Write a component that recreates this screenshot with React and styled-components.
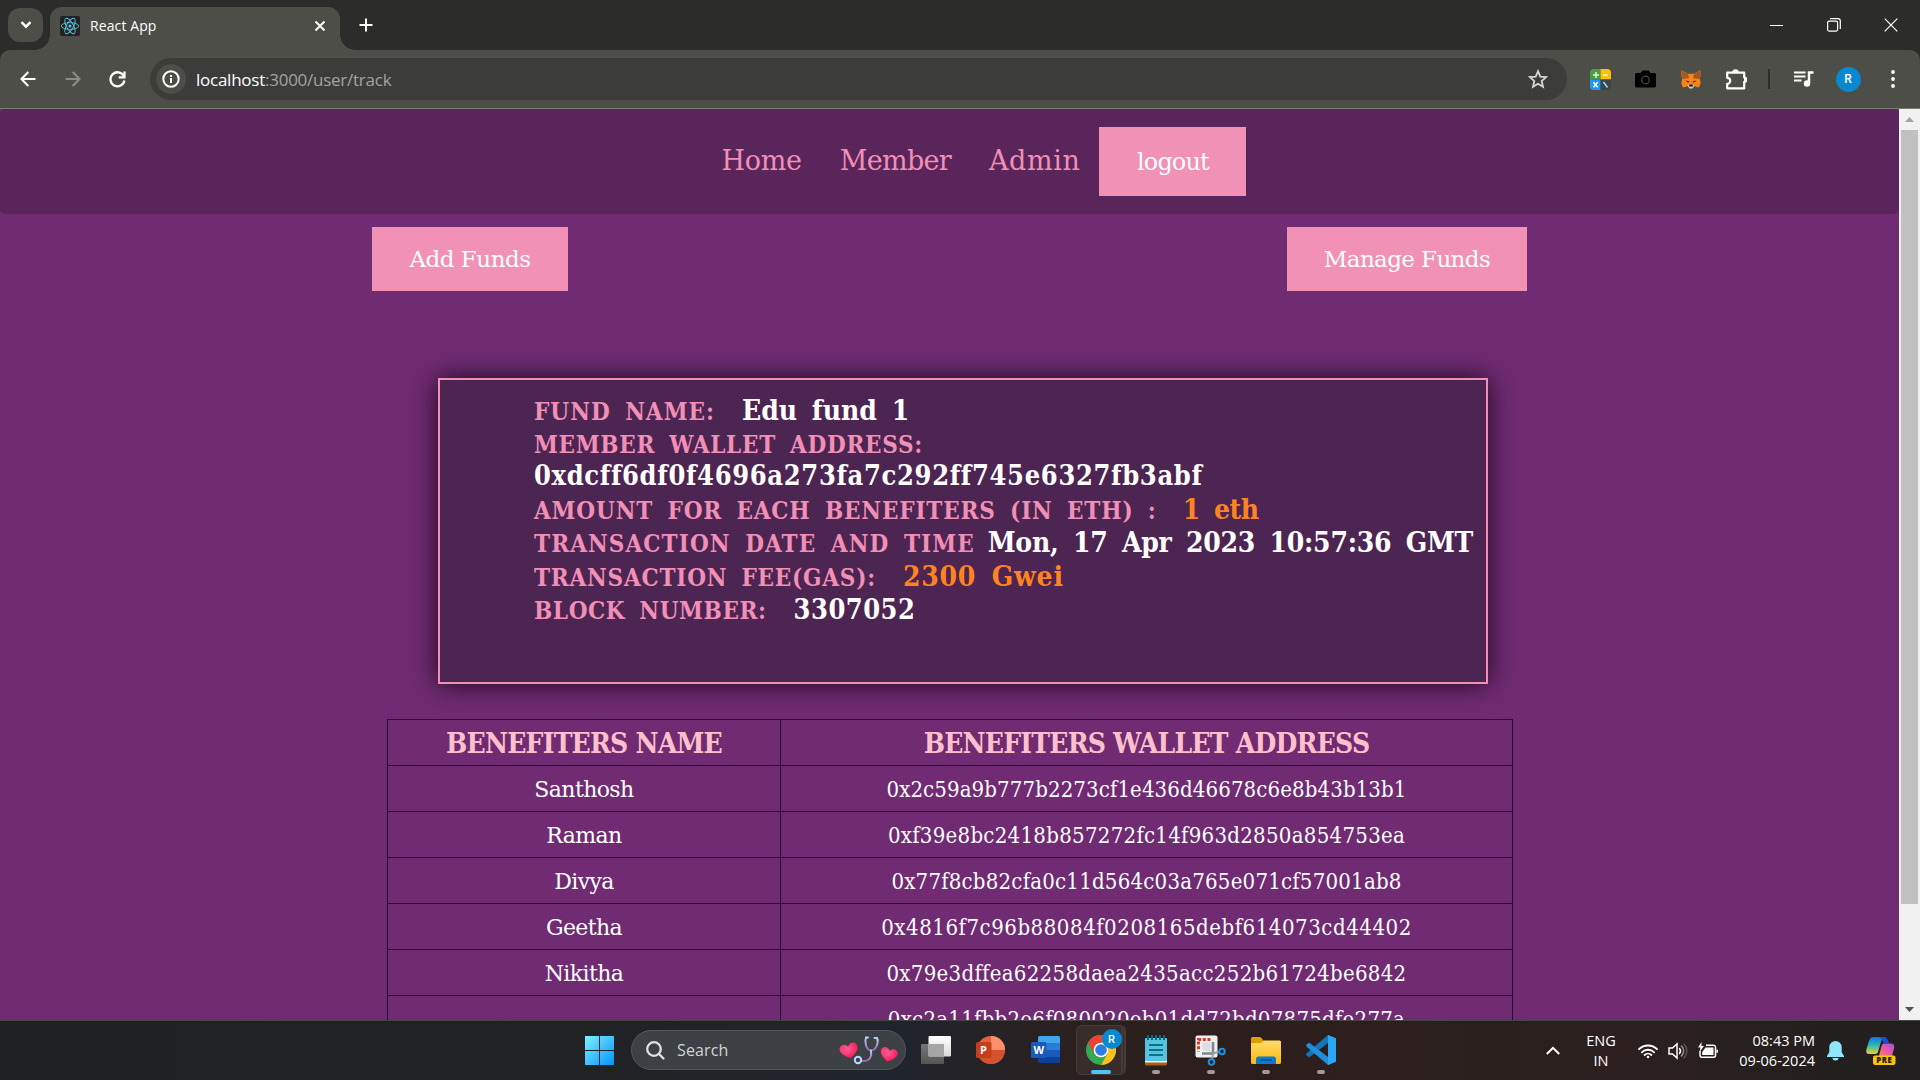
import React from "react";
import styled, { createGlobalStyle } from "styled-components";

const GlobalStyle = createGlobalStyle`
  *, *::before, *::after { box-sizing: border-box; }
  html, body { margin: 0; padding: 0; background: #702b73; overflow: hidden; }
`;

const UI = `"Open Sans", "Noto Sans", sans-serif`;
const SERIF = `"DejaVu Serif", "Liberation Serif", serif`;
const SERIF_NARROW = `"DejaVu Serif Condensed", "DejaVu Serif", serif`;

const Screen = styled.div`
  width: 1920px;
  height: 1080px;
  display: flex;
  flex-direction: column;
  overflow: hidden;
  font-family: ${UI};
`;

/* ---------- browser chrome ---------- */

const TabStrip = styled.div`
  height: 50px;
  flex: none;
  background: #2c2c2a;
  display: flex;
  align-items: flex-end;
  padding-left: 8px;
`;

const TabSearch = styled.div`
  width: 35px;
  height: 34px;
  margin-bottom: 8px;
  border-radius: 12px;
  background: #4d4e48;
  display: grid;
  place-items: center;
`;

const Tab = styled.div`
  position: relative;
  width: 290px;
  height: 43px;
  margin-left: 7px;
  border-radius: 12px 12px 0 0;
  background: #4d4e48;
  display: flex;
  align-items: center;
  padding: 0 14px 6px 10px;
  color: #fff;
  font-size: 14px;

  &::before,
  &::after {
    content: "";
    position: absolute;
    bottom: 0;
    width: 15px;
    height: 15px;
  }
  &::before {
    left: -15px;
    background: radial-gradient(circle at 0 0, transparent 14.5px, #4d4e48 15px);
  }
  &::after {
    right: -15px;
    background: radial-gradient(circle at 100% 0, transparent 14.5px, #4d4e48 15px);
  }
`;

const Favicon = styled.div`
  width: 20px;
  height: 20px;
  border-radius: 2px;
  background: #222;
  display: grid;
  place-items: center;
`;

const TabTitle = styled.span`
  flex: 1;
  margin-left: 10px;
  letter-spacing: 0.1px;
`;

const NewTab = styled.div`
  width: 20px;
  height: 50px;
  margin-left: 16px;
  display: grid;
  place-items: center;
`;

const WindowButtons = styled.div`
  margin-left: auto;
  height: 50px;
  display: flex;
  align-items: center;
  padding-right: 1px;
`;

const WindowButton = styled.div`
  width: 57px;
  display: flex;
  justify-content: center;
`;

const ToolbarBack = styled.div`
  flex: none;
  height: 59px;
  background: #2c2c2a;
`;

const Toolbar = styled.div`
  height: 59px;
  background: #4d4e48;
  border-bottom: 1px solid #787973;
  border-radius: 10px 10px 0 0;
  display: flex;
  align-items: center;
`;

const Slot = styled.div`
  flex: none;
  width: ${(p) => p.$w}px;
  display: flex;
  justify-content: center;
  align-items: center;
`;

const Omnibox = styled.div`
  width: 1417px;
  height: 42px;
  margin-left: 5px;
  padding: 0 19px 0 6px;
  border-radius: 21px;
  background: #3c3c3a;
  display: flex;
  align-items: center;
`;

const SiteInfo = styled.div`
  width: 30px;
  height: 30px;
  border-radius: 50%;
  background: #4d4e48;
  display: grid;
  place-items: center;
`;

const Url = styled.div`
  flex: 1;
  margin-left: 10px;
  font-size: 17px;
  letter-spacing: -0.25px;
  color: #a3a4a0;
  b {
    font-weight: 400;
    color: #fff;
  }
`;

const Extensions = styled.div`
  display: flex;
  align-items: center;
  margin-left: 11px;
`;

const Divider = styled.div`
  width: 2px;
  height: 20px;
  background: #2d2d2a;
`;

const Avatar = styled.div`
  width: ${(p) => p.$size}px;
  height: ${(p) => p.$size}px;
  border-radius: 50%;
  background: #0788d1;
  color: #fff;
  font: 500 ${(p) => p.$font}px/1 Roboto, sans-serif;
  display: grid;
  place-items: center;
`;

/* ---------- page ---------- */

const Viewport = styled.div`
  height: 911px;
  flex: none;
  display: flex;
  overflow: hidden;
`;

const Page = styled.main`
  flex: 1;
  height: 911px;
  overflow: hidden;
  background: #702b73;
  font-family: ${SERIF};
`;

const Nav = styled.nav`
  height: 105px;
  padding-left: 50px;
  border-radius: 5px;
  background: #59255b;
  display: flex;
  align-items: center;
  justify-content: center;
`;

const NavLink = styled.a`
  padding: 0 19px 2px;
  font-size: 27px;
  letter-spacing: ${(p) => p.$ls}px;
  color: #f18fb6;
`;

const PinkButton = styled.button`
  width: ${(p) => p.$w}px;
  height: ${(p) => p.$h}px;
  padding: 0;
  border: 0;
  background: #f191b5;
  color: #fff;
  font-family: ${SERIF};
  font-size: ${(p) => p.$size}px;
  letter-spacing: ${(p) => p.$ls}px;
`;

const FundActions = styled.div`
  width: 1155px;
  margin: 13px 0 0 372px;
  display: flex;
  justify-content: space-between;
`;

const Card = styled.section`
  width: 1050px;
  height: 306px;
  margin: 87px 0 0 438px;
  padding: 14px 0 0 94px;
  border: 2px solid #f18fb6;
  background: #4d2552;
  box-shadow: 0 0 25px rgba(10, 0, 10, 0.85);
`;

const Line = styled.div`
  height: ${(p) => p.$h || 33}px;
  font: 700 28px/33px ${SERIF_NARROW};
  white-space: nowrap;
`;

const Label = styled.span`
  font-size: 24px;
  line-height: 1;
  word-spacing: 6px;
  letter-spacing: ${(p) => p.$ls}px;
  color: #f18fb6;
`;

const Value = styled.span`
  font-size: ${(p) => p.$size || 28}px;
  line-height: 1;
  margin-left: ${(p) => p.$gap || 0}px;
  word-spacing: 6px;
  letter-spacing: ${(p) => p.$ls}px;
  color: ${(p) => (p.$accent ? "#ff8421" : "#fff")};
`;

const Table = styled.table`
  width: 1125px;
  margin: 35px 0 0 387px;
  table-layout: fixed;
  border-collapse: collapse;
  font-family: ${SERIF_NARROW};
  text-align: center;
`;

const Th = styled.th`
  width: ${(p) => p.$w}px;
  height: 46px;
  padding: 2px 0 0;
  border: 1px solid #270b2a;
  font-size: 28px;
  line-height: 32px;
  letter-spacing: -0.8px;
  color: #ffc0cb;
  white-space: nowrap;
`;

const Td = styled.td`
  height: 46px;
  padding: 3px 0 0;
  border: 1px solid #270b2a;
  font-family: ${(p) => (p.$wide ? SERIF : SERIF_NARROW)};
  font-size: 22px;
  line-height: 26px;
  letter-spacing: ${(p) => p.$ls}px;
  color: #fff;
  white-space: nowrap;
`;

const Scrollbar = styled.div`
  width: 21px;
  height: 911px;
  background: #f1f1f1;
  display: flex;
  flex-direction: column;
  align-items: center;
`;

const ScrollArrow = styled.div`
  height: 21px;
  width: 21px;
  display: grid;
  place-items: center;
`;

const Thumb = styled.div`
  width: 17px;
  height: 774px;
  margin-bottom: auto;
  background: #c1c1c1;
`;

/* ---------- taskbar ---------- */

const Taskbar = styled.footer`
  height: 60px;
  flex: none;
  display: flex;
  align-items: flex-start;
  border-top: 1px solid #424441;
  background: linear-gradient(90deg, #202122 0, #202224 580px, #20242c 900px, #2b201f 1080px, #2c1e1c 1250px, #2b201f 1620px, #211f1f 1920px);
  color: #fff;
`;

const StartArea = styled.div`
  margin-left: 585px;
  display: flex;
  align-items: center;
  height: 58px;
`;

const SearchBox = styled.div`
  width: 275px;
  height: 40px;
  margin-left: 17px;
  padding: 0 7px 0 14px;
  border-radius: 20px;
  border: 1px solid #54575a;
  background: #3d4044;
  display: flex;
  align-items: center;
  color: #d3d4d5;
  font-size: 16px;
`;

const SearchText = styled.span`
  flex: 1;
  margin-left: 12px;
  letter-spacing: 0.15px;
`;

const Apps = styled.div`
  display: flex;
  margin-left: 2px;
`;

const AppSlot = styled.div`
  position: relative;
  width: 55px;
  height: 58px;
  display: flex;
  align-items: center;
  justify-content: center;

  &::after {
    content: "";
    display: ${(p) => (p.$state ? "block" : "none")};
    position: absolute;
    bottom: 5px;
    width: ${(p) => (p.$state === "active" ? 20 : 8)}px;
    height: 4px;
    border-radius: 2px;
    background: ${(p) => (p.$state === "active" ? "#4cc2ff" : "#a19a99")};
  }
`;

const ActiveTile = styled.div`
  position: relative;
  width: 50px;
  height: 50px;
  border-radius: 6px;
  border: 1px solid #463b3a;
  border-right: 5px double #463b3a;
  background: #392d2c;
  display: grid;
  place-items: center;
  padding-left: 4px;
`;

const Badge = styled.div`
  position: absolute;
  right: -1px;
  top: 3px;
`;

const Tray = styled.div`
  margin-left: auto;
  display: flex;
  align-items: center;
  height: 59px;
`;

const TrayText = styled.div`
  width: ${(p) => p.$w}px;
  margin: 0 ${(p) => p.$mr}px 0 ${(p) => p.$ml}px;
  text-align: ${(p) => p.$align};
  font-size: 14.5px;
  line-height: 20px;
  white-space: nowrap;
`;

const TrayIcon = styled.div`
  display: flex;
  margin-left: ${(p) => p.$ml || 0}px;
`;

/* ---------- icons ---------- */

const Stroke = ({ w, h = w, vb, sw = 2, color = "#fff", children, cap = "butt" }) => (
  <svg width={w} height={h} viewBox={vb || `0 0 ${w} ${h}`} fill="none" stroke={color} strokeWidth={sw} strokeLinecap={cap} strokeLinejoin="miter">
    {children}
  </svg>
);

const ReactLogo = () => (
  <svg width="20" height="20" viewBox="-10 -10 20 20" fill="none" stroke="#58c4dc" strokeWidth="0.9">
    <ellipse rx="8.7" ry="3.4" />
    <ellipse rx="8.7" ry="3.4" transform="rotate(60)" />
    <ellipse rx="8.7" ry="3.4" transform="rotate(120)" />
    <circle r="1.6" fill="#58c4dc" stroke="none" />
  </svg>
);

const CalcIcon = () => (
  <svg width="21" height="21" viewBox="0 0 21 21">
    <path d="M4 0h6.5v10.5H0V4a4 4 0 0 1 4-4z" fill="#43a047" />
    <path d="M10.5 0H17a4 4 0 0 1 4 4v6.5H10.5z" fill="#ffc107" />
    <path d="M0 10.5h10.5V21H4a4 4 0 0 1-4-4z" fill="#2196f3" />
    <path d="M10.5 10.5H21V17a4 4 0 0 1-4 4h-6.5z" fill="#37474f" />
    <path d="M3 6h6M6 3v6M13 6h5" stroke="#e8f5e9" strokeWidth="1.5" />
    <path d="M3.5 13.2l4.200 5M7.700 13.200l-4.200 5" stroke="#fff" strokeWidth="1.5" />
    <path d="M13.5 13l4 5.5" stroke="#cfd8dc" strokeWidth="1.3" />
  </svg>
);

const CameraIcon = () => (
  <svg width="21" height="18" viewBox="0 0 21 18">
    <path d="M1.5 3H5.5L7.5.5h6L15.5 3h4A1.5 1.5 0 0 1 21 4.5v11.500A1.5 1.5 0 0 1 19.5 17.500h-18A1.5 1.5 0 0 1 0 16V4.500A1.5 1.5 0 0 1 1.5 3z" fill="#000" />
    <circle cx="10.5" cy="10" r="3.8" fill="none" stroke="#4d4e48" strokeWidth="1.2" />
  </svg>
);

const FoxIcon = () => (
  <svg width="20" height="19" viewBox="0 0 20 19">
    <path d="M.6.3 7 3.800h6L19.400.3l.3 5-1 3.700 1 4-1.700 4.500-4.500-1.200L11.500 18h-3l-2-1.700L2 17.500.3 13l1-4L.3 5.300z" fill="#f6851b" />
    <path d="M.6.3 7 3.800 8 8.200 1.500 9 .3 5.300zM19.400.3 13 3.800l-1 4.400 6.500.8 1.200-3.700z" fill="#a8571f" />
    <path d="M4.500 10.500l4 .8-1.300 1.500zM15.500 10.500l-4 .8 1.300 1.500z" fill="#33302c" />
    <path d="M6.500 15.500l2-1h3l2 1-2 3h-3z" fill="#d9c8ba" />
    <path d="M8.300 14.600h3.400l.3 1.900H8z" fill="#161616" />
  </svg>
);

const WindowsIcon = () => (
  <svg width="29" height="29" viewBox="0 0 29 29">
    <defs>
      <linearGradient id="win" x1="0" y1="0" x2="1" y2="1">
        <stop offset="0" stopColor="#7df0ff" />
        <stop offset="1" stopColor="#0594fb" />
      </linearGradient>
    </defs>
    <path d="M0 0h14v14H0zM15 0h14v14H15zM0 15h14v14H0zM15 15h14v14H15z" fill="url(#win)" />
  </svg>
);

const HeartsScope = () => (
  <svg width="60" height="30" viewBox="0 0 60 30">
    <defs>
      <radialGradient id="heart" cx=".4" cy=".35" r=".7">
        <stop offset="0" stopColor="#ff5f9b" />
        <stop offset="1" stopColor="#f3154f" />
      </radialGradient>
      <linearGradient id="tube" x1="0" y1="0" x2="0" y2="1">
        <stop offset="0" stopColor="#b9d3f2" />
        <stop offset="1" stopColor="#9068a6" />
      </linearGradient>
    </defs>
    <g fill="url(#heart)">
      <path d="M0 0C-6-3.500-10-7-9-11.500-8-15.500-2-16 0-11.500 2-16 8-15.500 9-11.500 10-7 6-3.500 0 0z" transform="translate(13 23) rotate(-14)" />
      <path d="M0 0C-6-3.500-10-7-9-11.500-8-15.500-2-16 0-11.500 2-16 8-15.500 9-11.500 10-7 6-3.500 0 0z" transform="translate(49 26.5) rotate(14) scale(.93)" />
    </g>
    <g fill="none" stroke="url(#tube)" strokeWidth="2" strokeLinecap="round">
      <path d="M30 2.500h-2c-1.500 4 0 13 5 13s8-8 6-12.500h-2.500" />
      <path d="M33 15.500c1 6-1 10.500-7 10.500h-3" />
    </g>
    <circle cx="20" cy="25" r="3.2" fill="none" stroke="#b5dcff" strokeWidth="2" />
  </svg>
);

const TaskViewIcon = () => (
  <svg width="30" height="28" viewBox="0 0 30 28">
    <defs>
      <linearGradient id="tvb" x1="0" y1="0" x2="0" y2="1">
        <stop offset="0" stopColor="#777" />
        <stop offset="1" stopColor="#555" />
      </linearGradient>
      <linearGradient id="tvf" x1="0" y1="0" x2="0" y2="1">
        <stop offset="0" stopColor="#fff" />
        <stop offset="1" stopColor="#d9d9d9" />
      </linearGradient>
    </defs>
    <rect y="8" width="23" height="20" rx="1" fill="url(#tvb)" />
    <rect x="7.5" width="22.5" height="20.5" rx="1" fill="url(#tvf)" />
    <path d="M7.5 8H23v12.500H7.500z" fill="#a5a5a5" />
  </svg>
);

const OfficeText = ({ x, y, children, size = 11 }) => (
  <text x={x} y={y} fill="#fff" fontFamily="Open Sans, sans-serif" fontWeight="700" fontSize={size} textAnchor="middle">
    {children}
  </text>
);

const PowerPointIcon = () => (
  <svg width="29" height="28" viewBox="0 0 29 28">
    <circle cx="15" cy="14" r="14" fill="#e0603f" />
    <path d="M15 0a14 14 0 0 1 14 14H15z" fill="#ff8f6b" />
    <path d="M1 14a14 14 0 0 0 28 0z" fill="#d35230" />
    <rect y="6" width="15.5" height="16" rx="1.5" fill="#c43e1c" />
    <OfficeText x="7.5" y="18">P</OfficeText>
  </svg>
);

const WordIcon = () => (
  <svg width="29" height="28" viewBox="0 0 29 28">
    <path d="M7 1.500A1.5 1.5 0 0 1 8.500 0h19A1.5 1.5 0 0 1 29 1.500V7H7z" fill="#41a5ee" />
    <path d="M7 7h22v7H7z" fill="#2b7cd3" />
    <path d="M7 14h22v7H7z" fill="#185abd" />
    <path d="M7 21h22v4.500a1.5 1.5 0 0 1-1.500 1.500h-19A1.5 1.5 0 0 1 7 25.500z" fill="#103f91" />
    <rect y="6" width="15.5" height="16" rx="1.5" fill="#185abd" />
    <OfficeText x="7.7" y="18">W</OfficeText>
  </svg>
);

const ChromeIcon = () => (
  <svg width="30" height="30" viewBox="-15 -15 30 30">
    <circle r="15" fill="#34a853" />
    <path d="M-13-7.500A15 15 0 0 1 13-7.500H0L-6.500 3.700z" fill="#ea4335" />
    <path d="M13-7.500A15 15 0 0 1 0 15L6.500 3.700 0-7.500z" fill="#fbc116" />
    <circle r="7.3" fill="#fff" />
    <circle r="5.8" fill="#2a7de9" />
  </svg>
);

const NotepadIcon = () => (
  <svg width="22" height="31" viewBox="0 0 22 31">
    <rect y="25" width="22" height="5.5" rx="1" fill="#a85e1b" />
    <rect y="25" width="22" height="2.5" fill="#f5efe6" />
    <rect y="3" width="22" height="23" rx="1" fill="#54c4e0" />
    <path d="M3 0v5M7 0v5M11 0v5M15 0v5M19 0v5" stroke="#0c6880" strokeWidth="2" />
    <path d="M4 10h14M4 15h14M4 20h14" stroke="#0e6f8c" strokeWidth="1.8" />
  </svg>
);

const SnipIcon = () => (
  <svg width="31" height="31" viewBox="0 0 31 31">
    <rect x="0.5" y="0.5" width="22" height="22" rx="2" fill="#eef0f2" />
    <path d="M15.500 4.500H3.500v12" fill="none" stroke="#d83b1e" strokeWidth="3" strokeDasharray="3 1.7" />
    <path d="M7.500 8h8v8h-8z" fill="#dcdfe2" />
    <path d="M18 7v11.500H7" fill="none" stroke="#7f868c" strokeWidth="2.6" />
    <path d="M18 18.500l7-2M18 18.500l-1 6" stroke="#9aa1a6" strokeWidth="2" />
    <circle cx="27" cy="16.5" r="2.8" fill="none" stroke="#1b8fe0" strokeWidth="2" />
    <circle cx="16.5" cy="27" r="2.8" fill="none" stroke="#1b8fe0" strokeWidth="2" />
  </svg>
);

const FolderIcon = () => (
  <svg width="30" height="27" viewBox="0 0 30 27">
    <defs>
      <linearGradient id="fold" x1="0" y1="0" x2="0" y2="1">
        <stop offset="0" stopColor="#ffdb6b" />
        <stop offset="1" stopColor="#f9b90f" />
      </linearGradient>
    </defs>
    <path d="M0 1.500A1.5 1.5 0 0 1 1.500 0h8l3.500 4H28v6H0z" fill="#e19d00" />
    <path d="M0 6h10l3-2.500h15.500A1.5 1.5 0 0 1 30 5v20.500A1.5 1.5 0 0 1 28.500 27h-27A1.5 1.5 0 0 1 0 25.500z" fill="url(#fold)" />
    <path d="M5 27v-5a2.5 2.5 0 0 1 2.500-2.500h15A2.5 2.5 0 0 1 25 22v5z" fill="#0f78cf" />
    <path d="M9 23h12" stroke="#0a4f92" strokeWidth="1.5" />
  </svg>
);

const VsCodeIcon = () => (
  <svg width="30" height="30" viewBox="0 0 30 30">
    <path d="M22 8L3.300 22.200.3 20.600v-2L22 0h1z" fill="#1276bd" />
    <path d="M22 22L3.300 7.800.3 9.400v2L22 30h1z" fill="#1d8fdc" />
    <path d="M22 0l8 3.200v23.600L22 30z" fill="#2aa8f3" />
  </svg>
);

const WifiIcon = () => (
  <Stroke w={20} h={16} sw={1.8} cap="round">
    <path d="M1 6.200a12.800 12.800 0 0 1 18 0M3.800 9.300a8.800 8.800 0 0 1 12.400 0M6.600 12a4.900 4.900 0 0 1 6.800 0" />
    <circle cx="10" cy="14" r="1.3" fill="#fff" stroke="none" />
  </Stroke>
);

const VolumeIcon = () => (
  <Stroke w={20} h={18} sw={1.5} cap="round">
    <path d="M1 6h3.500L9 2v14l-4.500-4H1z" />
    <path d="M11.500 6.500a4 4 0 0 1 0 5" />
    <path d="M13.500 4a7 7 0 0 1 0 10" stroke="#99908f" />
    <path d="M16 2a10 10 0 0 1 0 14" stroke="#5d5352" />
  </Stroke>
);

const BatteryIcon = () => (
  <svg width="21" height="17" viewBox="0 0 21 17">
    <path d="M8 3.200h7.500a2 2 0 0 1 2 2v8a2 2 0 0 1-2 2H4a2 2 0 0 1-2-2V9" fill="none" stroke="#fff" strokeWidth="1.5" />
    <path d="M7.500 5.500h8v7.500H4.200V10z" fill="#fff" />
    <path d="M18.500 7.500c1.500 0 1.500.5 1.500 1.700s0 1.700-1.500 1.700z" fill="#fff" />
    <path d="M3.500 0L0 5.500h2.500L1.500 10 6 4H3.500z" fill="#fff" />
  </svg>
);

const BellIcon = () => (
  <svg width="17" height="20" viewBox="0 0 17 20">
    <path d="M8.500 0a6.200 6.200 0 0 1 6.200 6.200v5L17 15v1H0v-1l2.300-3.800v-5A6.200 6.200 0 0 1 8.500 0zM5.500 17h6a3 2.500 0 0 1-6 0z" fill="#8fe6fb" />
  </svg>
);

const CopilotIcon = () => (
  <svg width="30" height="30" viewBox="0 0 30 30">
    <defs>
      <linearGradient id="cpa" x1="0" y1="0" x2="0" y2="1">
        <stop offset="0" stopColor="#1573e0" />
        <stop offset=".5" stopColor="#2db9b4" />
        <stop offset="1" stopColor="#f1d320" />
      </linearGradient>
      <linearGradient id="cpb" x1="1" y1="0" x2="0" y2="1">
        <stop offset="0" stopColor="#a84fe0" />
        <stop offset=".6" stopColor="#ef5a9c" />
        <stop offset="1" stopColor="#fb8a54" />
      </linearGradient>
    </defs>
    <path d="M7 1h12c-3 1-4 4-5 8l-2 7c-1 2-2 2-4 2H3c-3 0-3-3-2.500-5L3 5c.7-2 2-4 4-4z" fill="url(#cpa)" />
    <path d="M12 1h6c3 0 3.500 2.500 5 6h-4c-2.500 0-3-5-7-6z" fill="#1c50cf" />
    <path d="M18 7.500h7c3.500 0 3.500 3 3 5l-2 7.500H13l2-8c.7-3 1.500-4.500 3-4.500z" fill="url(#cpb)" />
    <rect x="7" y="19.5" width="22.5" height="9.5" rx="2" fill="#fcc30b" />
    <text x="18.3" y="27.3" fill="#201a10" fontFamily="Open Sans, sans-serif" fontWeight="800" fontSize="7.8" letterSpacing=".6" textAnchor="middle">
      PRE
    </text>
  </svg>
);

/* ---------- data ---------- */

const benefiters = [
  { name: "Santhosh", address: "0x2c59a9b777b2273cf1e436d46678c6e8b43b13b1", ls: 0.11 },
  { name: "Raman", address: "0xf39e8bc2418b857272fc14f963d2850a854753ea", ls: 0.28 },
  { name: "Divya", address: "0x77f8cb82cfa0c11d564c03a765e071cf57001ab8", ls: 0.22 },
  { name: "Geetha", address: "0x4816f7c96b88084f0208165debf614073cd44402", ls: 0.54 },
  { name: "Nikitha", address: "0x79e3dffea62258daea2435acc252b61724be6842", ls: 0.3 },
  { name: "", address: "0xc2a11fbb2e6f080020eb01dd72bd07875dfe277a", ls: 0.26 },
];

export default function App() {
  return (
    <Screen>
      <GlobalStyle />
      <TabStrip>
        <TabSearch>
          <Stroke w={12} h={8} sw={2.4}><path d="M1.500 1.200l4.500 4.500 4.500-4.500" /></Stroke>
        </TabSearch>
        <Tab>
          <Favicon><ReactLogo /></Favicon>
          <TabTitle>React App</TabTitle>
          <Stroke w={12} sw={1.9}><path d="M1.500 1.500l9 9M10.500 1.500l-9 9" /></Stroke>
        </Tab>
        <NewTab>
          <Stroke w={14} sw={2}><path d="M7 .5v13M.5 7h13" /></Stroke>
        </NewTab>
        <WindowButtons>
          <WindowButton><Stroke w={13} sw={1}><path d="M0 6.500h13" /></Stroke></WindowButton>
          <WindowButton>
            <Stroke w={14} sw={1.2}>
              <rect x=".6" y="3.1" width="10" height="10" rx="1.5" />
              <path d="M3 .7h8a2.300 2.300 0 0 1 2.300 2.300v8" />
            </Stroke>
          </WindowButton>
          <WindowButton><Stroke w={14} sw={1.2}><path d="M.7.7l12.600 12.600M13.300.7L.7 13.300" /></Stroke></WindowButton>
        </WindowButtons>
      </TabStrip>

      <ToolbarBack>
        <Toolbar>
          <Slot $w={55}><Stroke w={16} sw={2.1}><path d="M15.500 8H2M8.300 1L1.500 8l6.800 7" /></Stroke></Slot>
          <Slot $w={35}><Stroke w={16} sw={2.1} color="#8b8c87"><path d="M.5 8H14M7.700 1l6.800 7-6.800 7" /></Stroke></Slot>
          <Slot $w={55}>
            <Stroke w={17} sw={2.3}>
              <path d="M14.700 5A7 7 0 1 0 15.400 9.500" />
              <path d="M15.500.5v5.800H9.700" />
            </Stroke>
          </Slot>
          <Omnibox>
            <SiteInfo>
              <Stroke w={18} sw={2}>
                <circle cx="9" cy="9" r="7.7" />
                <path d="M9 8v5M9 5v2" />
              </Stroke>
            </SiteInfo>
            <Url><b>localhost</b>:3000/user/track</Url>
            <Stroke w={20} sw={1.8} color="#d5d5d2">
              <path d="M10 2.200l2.300 5.400 5.800.5-4.400 3.900 1.300 5.800-5-3.100-5 3.100 1.300-5.800L1.900 8.100l5.800-.5z" />
            </Stroke>
          </Omnibox>
          <Extensions>
            <Slot $w={45}><CalcIcon /></Slot>
            <Slot $w={45}><CameraIcon /></Slot>
            <Slot $w={45}><FoxIcon /></Slot>
            <Slot $w={46}>
              <svg width="21" height="21" viewBox="0 0 21 21">
                <path d="M1.200 3.700h17v4.800a2.200 2.200 0 0 1 0 4.400v6.500H1.200v-4.600a3 3 0 0 0 0-6z" fill="none" stroke="#fff" strokeWidth="2.2" strokeLinejoin="round" />
                <path d="M6.300 3a3.200 2.800 0 0 1 6.400 0zM18 8a2.800 2.800 0 0 1 0 5.500z" fill="#fff" />
              </svg>
            </Slot>
            <Slot $w={20}><Divider /></Slot>
            <Slot $w={49}>
              <svg width="20" height="16" viewBox="0 0 20 16">
                <path d="M0 1.500h11.500M0 5.500h11.500M0 9.500h7.500" stroke="#fff" strokeWidth="2" />
                <path d="M15 12V1.500h4.500" fill="none" stroke="#fff" strokeWidth="2.5" />
                <circle cx="13" cy="12.5" r="3.2" fill="#fff" />
              </svg>
            </Slot>
            <Slot $w={40}><Avatar $size={25} $font={12}>R</Avatar></Slot>
            <Slot $w={49}>
              <svg width="4" height="18" viewBox="0 0 4 18" fill="#fff">
                <circle cx="2" cy="2" r="1.9" /><circle cx="2" cy="9" r="1.9" /><circle cx="2" cy="16" r="1.9" />
              </svg>
            </Slot>
          </Extensions>
        </Toolbar>
      </ToolbarBack>

      <Viewport>
        <Page>
          <Nav>
            <NavLink $ls={-0.3}>Home</NavLink>
            <NavLink $ls={-0.7}>Member</NavLink>
            <NavLink $ls={0.6}>Admin</NavLink>
            <PinkButton $w={147} $h={69} $size={24} $ls={-0.9}>logout</PinkButton>
          </Nav>
          <FundActions>
            <PinkButton $w={196} $h={64} $size={23} $ls={-0.5}>Add Funds</PinkButton>
            <PinkButton $w={240} $h={64} $size={23} $ls={-0.6}>Manage Funds</PinkButton>
          </FundActions>
          <Card>
            <Line><Label $ls={1}>FUND NAME:</Label><Value $gap={27} $ls={0}>Edu fund 1</Value></Line>
            <Line $h={32}><Label $ls={0.7}>MEMBER WALLET ADDRESS:</Label></Line>
            <Line $h={34}><Value $size={27} $ls={0.67}>0xdcff6df0f4696a273fa7c292ff745e6327fb3abf</Value></Line>
            <Line><Label $ls={0.84}>AMOUNT FOR EACH BENEFITERS (IN ETH) :</Label><Value $accent $gap={26} $ls={-0.5}>1 eth</Value></Line>
            <Line $h={34}><Label $ls={1.08}>TRANSACTION DATE AND TIME</Label><Value $gap={13} $ls={-0.27}>Mon, 17 Apr 2023 10:57:36 GMT</Value></Line>
            <Line><Label $ls={0.77}>TRANSACTION FEE(GAS):</Label><Value $accent $gap={27} $ls={0.8}>2300 Gwei</Value></Line>
            <Line><Label $ls={0.6}>BLOCK NUMBER:</Label><Value $size={27} $gap={27} $ls={0.5}>3307052</Value></Line>
          </Card>
          <Table>
            <thead>
              <tr>
                <Th $w={393}>BENEFITERS NAME</Th>
                <Th $w={732}>BENEFITERS WALLET ADDRESS</Th>
              </tr>
            </thead>
            <tbody>
              {benefiters.map((b) => (
                <tr key={b.address}>
                  <Td $wide $ls={-0.6}>{b.name}</Td>
                  <Td $ls={b.ls}>{b.address}</Td>
                </tr>
              ))}
            </tbody>
          </Table>
        </Page>
        <Scrollbar>
          <ScrollArrow><svg width="9" height="5"><path d="M0 5L4.500 0 9 5z" fill="#a3a3a3" /></svg></ScrollArrow>
          <Thumb />
          <ScrollArrow><svg width="9" height="5"><path d="M0 0L4.500 5 9 0z" fill="#505050" /></svg></ScrollArrow>
        </Scrollbar>
      </Viewport>

      <Taskbar>
        <StartArea>
          <WindowsIcon />
          <SearchBox>
            <Stroke w={19} sw={2.3} color="#dfe0e1" cap="round">
              <circle cx="8" cy="8" r="6.8" />
              <path d="M13 13l4.500 4.500" />
            </Stroke>
            <SearchText>Search</SearchText>
            <HeartsScope />
          </SearchBox>
        </StartArea>
        <Apps>
          <AppSlot><TaskViewIcon /></AppSlot>
          <AppSlot><PowerPointIcon /></AppSlot>
          <AppSlot><WordIcon /></AppSlot>
          <AppSlot $state="active">
            <ActiveTile>
              <ChromeIcon />
              <Badge><Avatar $size={20} $font={11}>R</Avatar></Badge>
            </ActiveTile>
          </AppSlot>
          <AppSlot $state="open"><NotepadIcon /></AppSlot>
          <AppSlot $state="open"><SnipIcon /></AppSlot>
          <AppSlot $state="open"><FolderIcon /></AppSlot>
          <AppSlot $state="open"><VsCodeIcon /></AppSlot>
        </Apps>
        <Tray>
          <Stroke w={14} h={9} sw={2}><path d="M.8 8L7 1.800 13.200 8" /></Stroke>
          <TrayText $w={32} $ml={25} $mr={21} $align="center">ENG<br />IN</TrayText>
          <TrayIcon><WifiIcon /></TrayIcon>
          <TrayIcon $ml={10}><VolumeIcon /></TrayIcon>
          <TrayIcon $ml={10}><BatteryIcon /></TrayIcon>
          <TrayText $w={80} $ml={16} $mr={12} $align="right">08:43 PM<br />09-06-2024</TrayText>
          <TrayIcon><BellIcon /></TrayIcon>
          <TrayIcon $ml={22}><CopilotIcon /></TrayIcon>
          <Slot $w={24} />
        </Tray>
      </Taskbar>
    </Screen>
  );
}
